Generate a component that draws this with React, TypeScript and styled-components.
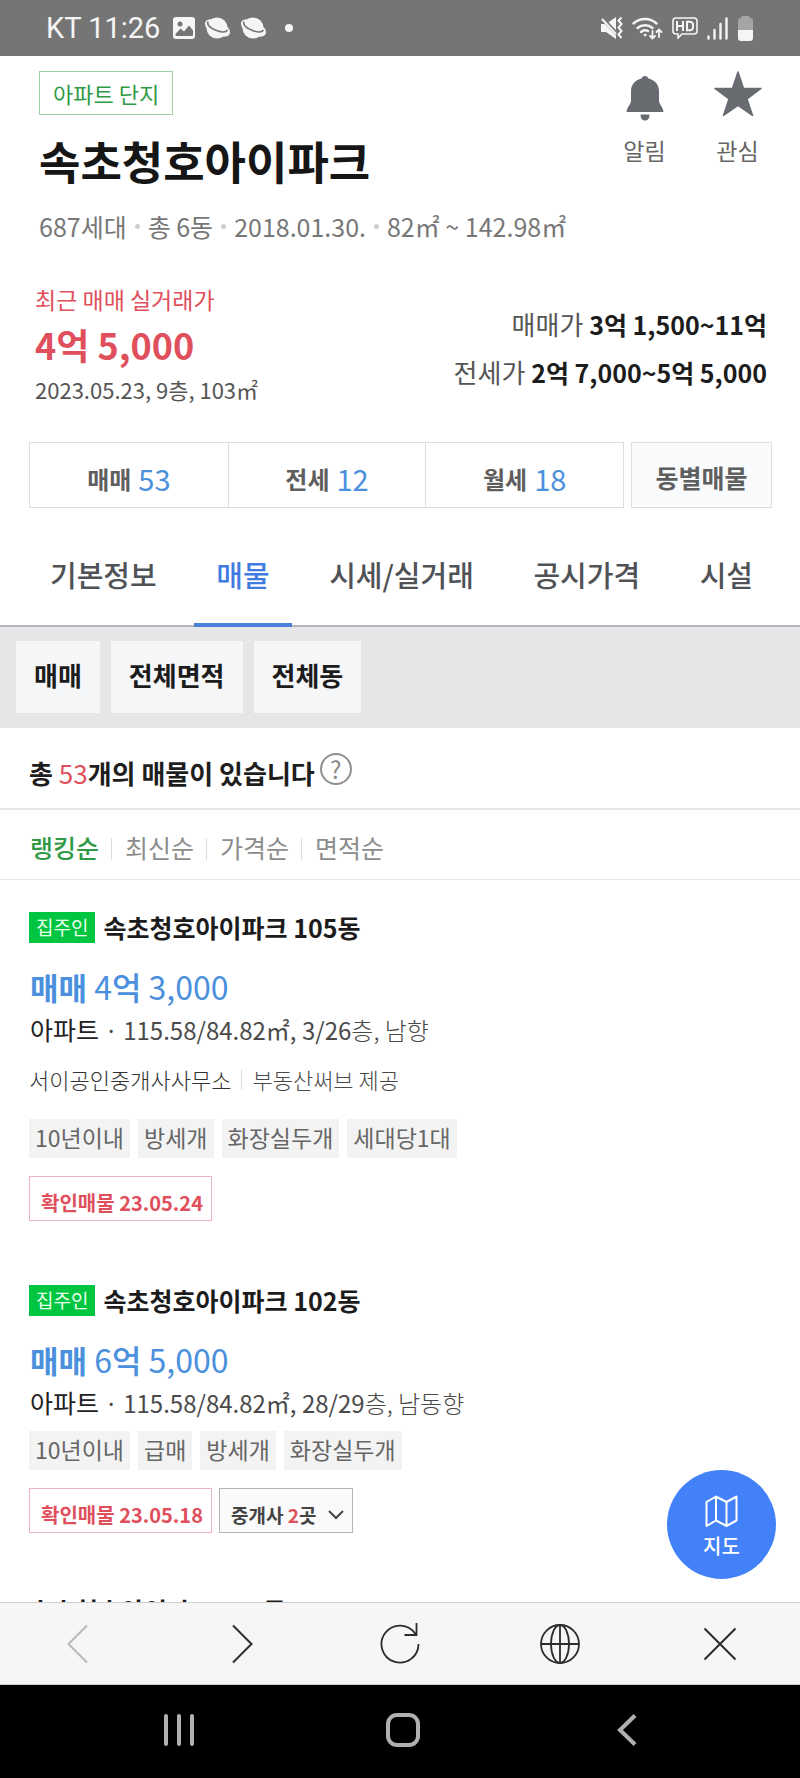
import React from 'react';
import styled, { createGlobalStyle, css } from 'styled-components';

const GlobalStyle = createGlobalStyle`
  *, *::before, *::after { box-sizing: border-box; }
  body {
    margin: 0;
    background: #fff;
    color: #1e1e1e;
    font-family: "Noto Sans CJK KR", "Noto Sans", sans-serif;
    font-size: 24px;
  }
  button { font: inherit; color: inherit; background: none; border: 0; padding: 0; margin: 0; cursor: pointer; }
  a { color: inherit; text-decoration: none; }
  h1, h2, p, ul { margin: 0; padding: 0; font-weight: 400; }
  ul { list-style: none; }
  svg { display: block; flex: none; }
`;

const red = '#df4f5c';
const blue = '#4a90dd';

const Screen = styled.div`
  display: flex;
  flex-direction: column;
  height: 100vh;
`;

/* Status bar */
const StatusBar = styled.header`
  flex: none;
  display: flex;
  align-items: center;
  justify-content: space-between;
  height: 56px;
  padding: 0 46px;
  background: #757575;
  color: #f5f5f5;
  font-family: Roboto, "Noto Sans CJK KR", sans-serif;
  font-size: 29px;
`;
const StatusGroup = styled.div`
  display: flex;
  align-items: center;
  gap: 9px;
`;
const Clock = styled.span`
  margin-right: 4px;
`;
const StatusDot = styled.span`
  width: 8px;
  height: 8px;
  margin-left: 9px;
  border-radius: 50%;
  background: #f5f5f5;
`;

/* Scrolling content */
const Viewport = styled.div`
  position: relative;
  flex: 1;
  min-height: 0;
`;
const Content = styled.main`
  height: 100%;
  overflow-y: auto;
  scrollbar-width: none;
`;

/* Complex header */
const ComplexHeader = styled.section`
  display: flex;
  justify-content: space-between;
  padding: 15px 16px 0 39px;
`;
const KindBadge = styled.span`
  display: inline-flex;
  align-items: center;
  height: 44px;
  padding: 0 13px;
  border: 1px solid #9fd0a8;
  color: #2f9a45;
  font-size: 22px;
  line-height: 32px;
`;
const Title = styled.h1`
  margin-top: 18px;
  color: #161616;
  font-size: 45px;
  font-weight: 700;
  line-height: 56px;
`;
const Meta = styled.p`
  display: flex;
  align-items: center;
  margin-top: 19px;
  color: #777;
  font-size: 25px;
  line-height: 36px;
  white-space: nowrap;
`;
const MetaDot = styled.span`
  width: 5px;
  height: 5px;
  margin: 0 8px;
  border-radius: 50%;
  background: #cdcdcd;
`;
const Actions = styled.div`
  display: flex;
  align-items: flex-start;
`;
const ActionButton = styled.button`
  display: flex;
  flex-direction: column;
  align-items: center;
  gap: 11px;
  width: 93px;
  color: #666;
  font-size: 23px;
  line-height: 32px;
`;

/* Prices */
const PriceSection = styled.section`
  display: flex;
  justify-content: space-between;
  align-items: flex-end;
  padding: 38px 33px 0 35px;
`;
const RecentLabel = styled.p`
  color: ${red};
  font-size: 23px;
  line-height: 34px;
`;
const RecentPrice = styled.p`
  color: ${red};
  font-size: 36px;
  font-weight: 700;
  line-height: 56px;
`;
const RecentDate = styled.p`
  color: #555;
  font-size: 22px;
  line-height: 34px;
`;
const RangeList = styled.div`
  padding-bottom: 10px;
  text-align: right;
  line-height: 48px;
`;
const Range = styled.p`
  color: #555;
  font-size: 26px;
  strong { color: #1c1c1c; font-size: 25px; font-weight: 700; }
`;

/* Trade counters */
const CounterRow = styled.div`
  display: flex;
  gap: 7px;
  padding: 36px 28px 0 29px;
`;
const Counters = styled.div`
  flex: 1;
  display: grid;
  grid-template-columns: repeat(3, 1fr);
  border: 1px solid #dedede;
`;
const Counter = styled.button`
  display: flex;
  align-items: center;
  justify-content: center;
  gap: 7px;
  height: 64px;
  padding-top: 7px;
  color: #5e5e5e;
  font-weight: 700;
  & + & { border-left: 1px solid #dedede; }
  span { color: ${blue}; font-size: 29px; font-weight: 400; line-height: 34px; padding-bottom: 2px; }
`;
const BuildingButton = styled.button`
  width: 141px;
  padding-top: 3px;
  border: 1px solid #dedede;
  background: #f8fafc;
  color: #5e5e5e;
  font-size: 25px;
  font-weight: 700;
`;

/* Tabs */
const Tabs = styled.nav`
  display: flex;
  justify-content: space-between;
  padding: 17px 25px 0 28px;
  box-shadow: inset 0 -2px #b4b6b9;
`;
const Tab = styled.a<{ $active?: boolean }>`
  height: 102px;
  padding: 0 22px;
  border-bottom: 4px solid ${(p) => (p.$active ? '#4a80d8' : 'transparent')};
  color: ${(p) => (p.$active ? '#3f7be0' : '#4f5256')};
  font-size: 29px;
  font-weight: 500;
  line-height: 98px;
  white-space: nowrap;
`;

/* Filters */
const Filters = styled.div`
  display: flex;
  gap: 11px;
  padding: 14px 16px 15px;
  background: #e5e6e8;
`;
const Filter = styled.button`
  height: 72px;
  padding: 0 18px 6px;
  background: #f5f6f8;
  color: #1c1c1c;
  font-size: 26px;
  font-weight: 700;
`;

/* Summary and sorting */
const Summary = styled.div`
  display: flex;
  align-items: center;
  gap: 5px;
  height: 82px;
  padding: 2px 29px 0;
  border-bottom: 2px solid #e6e6e6;
`;
const SummaryText = styled.h2`
  padding-top: 7px;
  font-size: 26px;
  font-weight: 700;
  span { color: ${red}; font-weight: 400; }
`;
const HelpButton = styled.button`
  width: 32px;
  height: 32px;
  border: 2px solid #8f8f8f;
  border-radius: 50%;
  color: #858585;
  font-size: 24px;
  line-height: 26px;
`;
const SortRow = styled.div`
  display: flex;
  align-items: center;
  height: 70px;
  padding: 4px 30px 0;
  border-bottom: 1px solid #e6e6e6;
`;
const Sort = styled.button<{ $active?: boolean }>`
  color: ${(p) => (p.$active ? '#2f9a45' : '#8c8c8c')};
  font-size: 25px;
  font-weight: ${(p) => (p.$active ? 500 : 400)};
  &:not(:first-child)::before {
    content: "";
    display: inline-block;
    width: 1px;
    height: 22px;
    margin: 0 13px 0 12px;
    background: #dcdcdc;
    vertical-align: -2px;
  }
`;

/* Listings */
const Listings = styled.div`
  display: flex;
  flex-direction: column;
  gap: 64px;
  padding: 32px 29px;
`;
const ListingHead = styled.div`
  display: flex;
  align-items: center;
  gap: 8px;
`;
const OwnerBadge = styled.span`
  height: 31px;
  padding: 0 7px;
  background: #00c540;
  color: #e6ffe9;
  font-size: 19px;
  line-height: 29px;
`;
const ListingName = styled.h2`
  padding-bottom: 2px;
  color: #1c1c1c;
  font-size: 25px;
  font-weight: 700;
  line-height: 26px;
`;
const ListingPrice = styled.p`
  margin-top: 22px;
  padding-left: 1px;
  color: ${blue};
  font-size: 32px;
  line-height: 42px;
  strong { font-size: 31px; font-weight: 700; }
  b { font-weight: 500; }
`;
const Detail = styled.p`
  padding-left: 1px;
  color: #4a4a4a;
  line-height: 42px;
  b { color: #222; font-size: 25px; font-weight: 400; }
  span { font-weight: 300; }
`;
const Agent = styled.p`
  display: flex;
  align-items: center;
  gap: 10px;
  margin: 10px 0 22px;
  color: #333;
  font-size: 22px;
  font-weight: 300;
  line-height: 36px;
  span { color: #4a4a4a; }
  i { width: 1px; height: 21px; background: #dcdcdc; }
`;
const Tags = styled.ul`
  display: flex;
  gap: 8px;
  margin-top: 7px;
`;
const Tag = styled.li`
  height: 39px;
  padding: 0 6px;
  background: #f3f3f3;
  color: #666;
  font-size: 23px;
  line-height: 36px;
`;
const Checks = styled.div`
  display: flex;
  gap: 7px;
  margin-top: 18px;
`;
const box = css`
  height: 45px;
  padding: 8px 8px 0 11px;
  font-weight: 700;
  line-height: 36px;
`;
const Verified = styled.span`
  ${box}
  border: 1px solid #ecb4bb;
  color: ${red};
  font-size: 20px;
`;
const AgentsButton = styled.button`
  ${box}
  display: flex;
  align-items: center;
  gap: 12px;
  border: 1px solid #b4b4b4;
  background: #fafafa;
  color: #444;
  font-size: 19px;
  em { color: ${red}; font-style: normal; }
`;

const MapButton = styled.button`
  position: absolute;
  right: 24px;
  bottom: 23px;
  display: flex;
  flex-direction: column;
  align-items: center;
  width: 109px;
  height: 109px;
  padding-top: 25px;
  border-radius: 50%;
  background: #4281f8;
  color: #fff;
  font-size: 20px;
  font-weight: 500;
  line-height: 32px;
  svg { margin-bottom: 3px; }
`;

/* Bottom bars */
const Toolbar = styled.nav`
  flex: none;
  display: grid;
  grid-template-columns: repeat(5, 1fr);
  height: 83px;
  border-top: 1px solid #cfcfcf;
  border-bottom: 1px solid #cfcfcf;
  background: #f6f6f6;
`;
const SystemBar = styled.nav`
  flex: none;
  display: grid;
  grid-template-columns: repeat(3, 1fr);
  height: 93px;
  padding: 0 61px 4px 67px;
  background: #000;
`;
const BarButton = styled.button`
  display: flex;
  align-items: center;
  justify-content: center;
`;

const PlanetIcon = () => (
  <svg width="27" height="24" viewBox="0 0 27 24" fill="none">
    <circle cx="13" cy="12" r="10.500" fill="#f5f5f5" />
    <ellipse cx="13.500" cy="12" rx="13.500" ry="7" transform="rotate(26 13.5 12)" fill="#f5f5f5" />
    <path d="M4 5.500C2.500 9 7 12.500 12.500 14.500c5 1.800 9.500 2 11-.5" stroke="#757575" strokeWidth="1.600" />
  </svg>
);

const StatusLeft = () => (
  <StatusGroup>
    <Clock>KT 11:26</Clock>
    <svg width="22" height="22" viewBox="0 0 22 22">
      <rect width="22" height="22" rx="3" fill="#f5f5f5" />
      <circle cx="7" cy="7" r="2.500" fill="#757575" />
      <path d="M2.500 17l5-5.500 3.500 3 5-6 4 5V18a1 1 0 0 1-1 1h-15a1.500 1.500 0 0 1-1.500-2z" fill="#757575" />
    </svg>
    <PlanetIcon />
    <PlanetIcon />
    <StatusDot />
  </StatusGroup>
);

const StatusRight = () => (
  <StatusGroup>
    <svg width="23" height="24" viewBox="0 0 23 24" fill="none">
      <path d="M1 8h5l10-7v22L6 16H1z" fill="#f5f5f5" />
      <path d="M2 2l15 16" stroke="#757575" strokeWidth="4" />
      <path d="M2 3l14 15" stroke="#f5f5f5" strokeWidth="2" />
      <path d="M21.500 1.500l-3 3 3 3.500-3 3.500 3 3.500-3 3.500 3 3.500" stroke="#f5f5f5" strokeWidth="2" />
    </svg>
    <svg width="31" height="24" viewBox="0 0 31 24" fill="none" stroke="#f5f5f5" strokeLinecap="round">
      <path d="M1.500 7.500a17 17 0 0 1 23 0M5.500 12a11.500 11.500 0 0 1 15 0M9 16a6.500 6.500 0 0 1 7-1" strokeWidth="2.400" />
      <circle cx="13" cy="19" r="1" fill="#f5f5f5" />
      <path d="M20.500 15v7M18 20l2.500 2.500L23 20M27 21v-7M24.500 16l2.500-2.500 2.500 2.500" strokeWidth="1.800" />
    </svg>
    <svg width="26" height="22" viewBox="0 0 26 22" fill="none" stroke="#f5f5f5">
      <path d="M4 1h18a3 3 0 0 1 3 3v10a3 3 0 0 1-3 3H10l-4 4v-4H4a3 3 0 0 1-3-3V4a3 3 0 0 1 3-3z" strokeWidth="1.600" />
      <path d="M5 4v10M11 4v10M5 9h6M15 4.800h2.500a3 3 0 0 1 3.500 3.200v2a3 3 0 0 1-3.500 3.200H15z" strokeWidth="2" />
    </svg>
    <svg width="21" height="23" viewBox="0 0 21 23" fill="none" stroke="#f5f5f5" strokeWidth="2.400" strokeLinecap="round">
      <path d="M1.500 19.500v2M7.500 13v8.500M13.500 7v14.500M19.500 1.500v20" />
    </svg>
    <svg width="17" height="25" viewBox="0 0 17 25">
      <path d="M4 2q0-2 2-2h5q2 0 2 2 3 0 3 3v10H1V5q0-3 3-3z" fill="#a5a5a5" />
      <path d="M1 14h15v8q0 3-3 3H4q-3 0-3-3z" fill="#f5f5f5" />
    </svg>
  </StatusGroup>
);

const filters = ['매매', '전체면적', '전체동'];
const sorts = ['랭킹순', '최신순', '가격순', '면적순'];
const tabs = ['기본정보', '매물', '시세/실거래', '공시가격', '시설'];
const counters: [string, number][] = [['매매', 53], ['전세', 12], ['월세', 18]];

type ListingData = {
  name: string;
  eok?: string;
  rest?: string;
  floor?: string;
  facing?: string;
  agent?: [string, string];
  tags?: string[];
  verified?: string;
  agents?: number;
};

const listings: ListingData[] = [
  {
    name: '속초청호아이파크 105동', eok: '4', rest: '3,000', floor: '3/26', facing: '남향',
    agent: ['서이공인중개사사무소', '부동산써브 제공'],
    tags: ['10년이내', '방세개', '화장실두개', '세대당1대'], verified: '23.05.24',
  },
  {
    name: '속초청호아이파크 102동', eok: '6', rest: '5,000', floor: '28/29', facing: '남동향',
    tags: ['10년이내', '급매', '방세개', '화장실두개'], verified: '23.05.18', agents: 2,
  },
  { name: '속초청호아이파크 102동' },
];

const Listing = ({ item }: { item: ListingData }) => (
  <article>
    <ListingHead>
      {item.eok && <OwnerBadge>집주인</OwnerBadge>}
      <ListingName>{item.name}</ListingName>
    </ListingHead>
    {item.eok && (
      <>
        <ListingPrice><strong>매매</strong> {item.eok}<b>억</b> {item.rest}</ListingPrice>
        <Detail><b>아파트</b> · 115.58/84.82㎡, {item.floor}<span>층, {item.facing}</span></Detail>
        {item.agent && <Agent>{item.agent[0]}<i /><span>{item.agent[1]}</span></Agent>}
        <Tags>{item.tags?.map((t) => <Tag key={t}>{t}</Tag>)}</Tags>
        <Checks>
          <Verified>확인매물 {item.verified}</Verified>
          {item.agents && (
            <AgentsButton>
              <span>중개사 <em>{item.agents}</em>곳</span>
              <svg width="16" height="10" viewBox="0 0 16 10" fill="none" stroke="#444" strokeWidth="2"><path d="M1 1l7 7 7-7" /></svg>
            </AgentsButton>
          )}
        </Checks>
      </>
    )}
  </article>
);

export default function App() {
  return (
    <Screen>
      <GlobalStyle />
      <StatusBar><StatusLeft /><StatusRight /></StatusBar>
      <Viewport>
        <Content>
          <ComplexHeader>
            <div>
              <KindBadge>아파트 단지</KindBadge>
              <Title>속초청호아이파크</Title>
              <Meta>
                687세대<MetaDot />총 6동<MetaDot />2018.01.30.<MetaDot />82㎡ ~ 142.98㎡
              </Meta>
            </div>
            <Actions>
              <ActionButton>
                <svg width="48" height="52" viewBox="0 0 48 52" fill="#686b70">
                  <path d="M24 5c2 0 3 1 3.500 2.500C34 9 38 14 38 20v10c0 3 4 6 4.500 11H5.500C6 36 10 33 10 30V20c0-6 4-11 10.500-12.500C21 6 22 5 24 5z" />
                  <path d="M19.500 43.500h9q0 6-4.500 6t-4.500-6z" />
                </svg>
                알림
              </ActionButton>
              <ActionButton>
                <svg width="48" height="52" viewBox="0 0 48 52" fill="#686b70" stroke="#686b70" strokeWidth="1.500" strokeLinejoin="round">
                  <path d="M24 1l5.500 16.500H47L33 28l5.500 16.500L24 34.500 9.500 44.500 15 28 1 17.500h17.500z" />
                </svg>
                관심
              </ActionButton>
            </Actions>
          </ComplexHeader>

          <PriceSection>
            <div>
              <RecentLabel>최근 매매 실거래가</RecentLabel>
              <RecentPrice>4억 5,000</RecentPrice>
              <RecentDate>2023.05.23, 9층, 103㎡</RecentDate>
            </div>
            <RangeList>
              <Range>매매가 <strong>3억 1,500~11억</strong></Range>
              <Range>전세가 <strong>2억 7,000~5억 5,000</strong></Range>
            </RangeList>
          </PriceSection>

          <CounterRow>
            <Counters>
              {counters.map(([label, n]) => <Counter key={label}>{label}<span>{n}</span></Counter>)}
            </Counters>
            <BuildingButton>동별매물</BuildingButton>
          </CounterRow>

          <Tabs>
            {tabs.map((t) => <Tab key={t} href="#" $active={t === '매물'}>{t}</Tab>)}
          </Tabs>

          <Filters>{filters.map((f) => <Filter key={f}>{f}</Filter>)}</Filters>

          <Summary>
            <SummaryText>총 <span>53</span>개의 매물이 있습니다</SummaryText>
            <HelpButton aria-label="도움말">?</HelpButton>
          </Summary>
          <SortRow>
            {sorts.map((s) => <Sort key={s} $active={s === '랭킹순'}>{s}</Sort>)}
          </SortRow>

          <Listings>{listings.map((l, i) => <Listing key={i} item={l} />)}</Listings>
        </Content>
        <MapButton>
          <svg width="33" height="32" viewBox="0 0 33 32" fill="none" stroke="#fff" strokeWidth="2" strokeLinejoin="round">
            <path d="M1.500 7L11 1.500l10.500 5.500L31.500 1.500v24L21.500 31 11 25.500 1.500 31zM11 1.500v24M21.500 7v24" />
          </svg>
          지도
        </MapButton>
      </Viewport>

      <Toolbar>
        <BarButton aria-label="뒤로">
          <svg width="26" height="40" viewBox="0 0 26 40" fill="none" stroke="#b8b8b8" strokeWidth="2"><path d="M20 1.500L1.500 20 20 38.500" /></svg>
        </BarButton>
        <BarButton aria-label="앞으로">
          <svg width="26" height="40" viewBox="0 0 26 40" fill="none" stroke="#2c2c2c" strokeWidth="2"><path d="M6 1.500L24.500 20 6 38.500" /></svg>
        </BarButton>
        <BarButton aria-label="새로고침">
          <svg width="40" height="42" viewBox="0 0 40 42" fill="none" stroke="#2c2c2c" strokeWidth="1.800">
            <path d="M38.500 21A18.500 18.500 0 1 1 35.500 11M36.500 0v12H24.500" />
          </svg>
        </BarButton>
        <BarButton aria-label="브라우저로 열기">
          <svg width="40" height="40" viewBox="0 0 40 40" fill="none" stroke="#2c2c2c" strokeWidth="1.800">
            <circle cx="20" cy="20" r="19" />
            <ellipse cx="20" cy="20" rx="9" ry="19" />
            <path d="M20 1v38M1 20h38" />
          </svg>
        </BarButton>
        <BarButton aria-label="닫기">
          <svg width="34" height="34" viewBox="0 0 34 34" stroke="#2c2c2c" strokeWidth="2"><path d="M1.500 1.500l31 31M32.500 1.500l-31 31" /></svg>
        </BarButton>
      </Toolbar>
      <SystemBar>
        <BarButton aria-label="최근 앱">
          <svg width="30" height="32" viewBox="0 0 30 32" stroke="#b0b0b0" strokeWidth="4" strokeLinecap="round"><path d="M2 2v28M15 2v28M28 2v28" /></svg>
        </BarButton>
        <BarButton aria-label="홈">
          <svg width="34" height="34" viewBox="0 0 34 34" fill="none" stroke="#b0b0b0" strokeWidth="4"><rect x="2" y="2" width="30" height="30" rx="9" /></svg>
        </BarButton>
        <BarButton aria-label="이전">
          <svg width="20" height="32" viewBox="0 0 20 32" fill="none" stroke="#b0b0b0" strokeWidth="4"><path d="M18 1.500L3 16l15 14.500" /></svg>
        </BarButton>
      </SystemBar>
    </Screen>
  );
}
